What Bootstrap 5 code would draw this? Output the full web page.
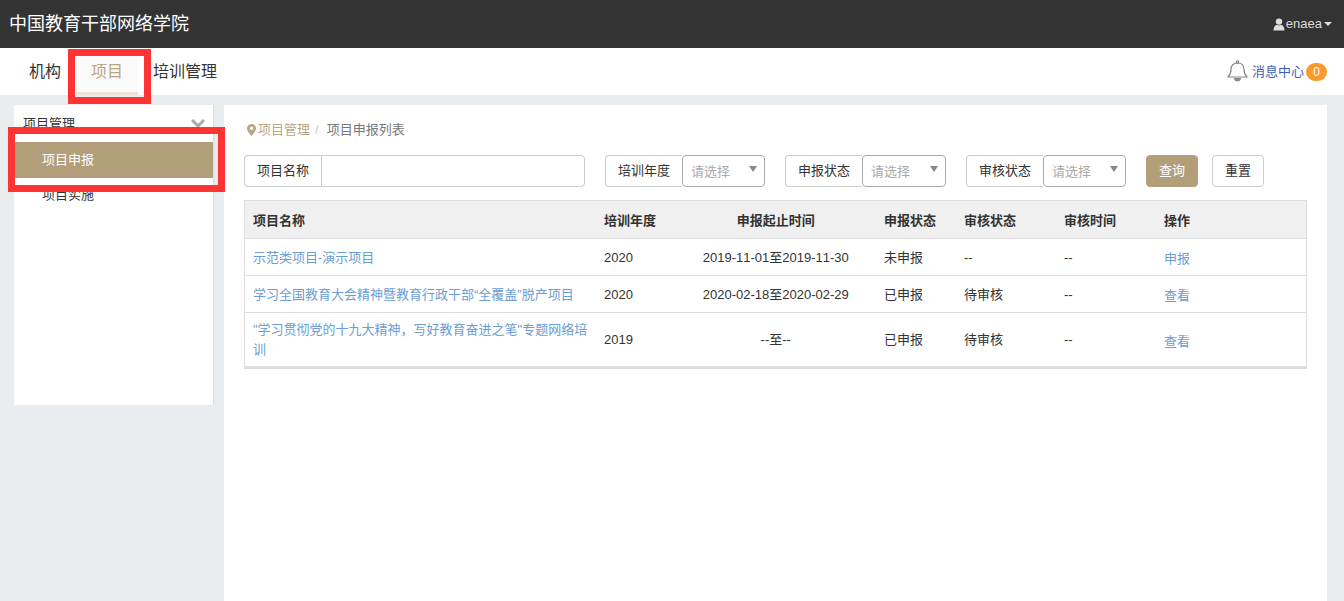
<!DOCTYPE html>
<html lang="zh-CN">
<head>
<meta charset="utf-8">
<title>中国教育干部网络学院</title>
<link rel="stylesheet" href="https://cdn.jsdelivr.net/npm/bootstrap@5.3.0/dist/css/bootstrap.min.css">
<style>
html,body{height:601px;overflow:hidden}
body{background:#e9edf0;font-family:"Liberation Sans","Noto Sans CJK SC",sans-serif;font-size:13px;color:#333;position:relative;font-kerning:none}
.top-bar{height:48px;background:#333;color:#fff;padding:0 12px 0 9px}
.brand-name{font-size:18px}
.user-menu{color:#ddd;font-size:13px}
.user-name{margin-left:1px}
.user-caret{width:0;height:0;border:4px solid transparent;border-top-color:#ddd;border-bottom:0;margin-left:2px}
.tab-bar{height:47px;background:#fff;padding-left:13px;padding-right:17px}
.tab-link{font-size:16px;color:#333;text-decoration:none;display:flex;align-items:center;height:39px;margin-top:8px;padding:0 15px 8px 16px}
.tab-on{width:62px;background:#fafafa;border-bottom:3px solid #eee3d3;color:#b9a684;justify-content:center;padding:0 0 5px 0}
.tab-last{padding-left:15px}
.msg-wrap{height:47px}
.bell-icon{margin-top:-2px}
.msg-link{color:#3c5fb5;text-decoration:none;font-size:13px}
.msg-count{background:#f89a2c;color:#fff;border-radius:10px;width:21px;height:18px;font-size:12px;line-height:18px;text-align:center;margin-left:2px}
.page-body{padding:10px 17px 0 14px;gap:11px;height:506px}
.side-panel{width:199px;height:300px;background:#fff;box-shadow:1px 0 1px #ddd;flex:none}
.side-head{height:37px;padding:0 8px 0 9px;font-size:13px;color:#333}
.side-item{height:36px;padding-left:28px;padding-bottom:2px;display:flex;align-items:center;color:#333;text-decoration:none;font-size:13px}
.side-on{background:#b29e78;color:#fff;padding-bottom:0}
.main-panel{flex:1;background:#fff;padding:17px 20px 0 20px;min-width:0}
.crumbs{height:16px;margin-bottom:17px;color:#999;font-size:13px;padding-left:3px}
.crumb-pin{margin-right:2px}
.crumb-a{color:#b9a684}
.crumb-sep{color:#ccc;margin:0 8px 0 5px}
.crumb-b{color:#777}
.filter-row{height:32px;margin-bottom:13px}
.label-box{height:32px;border:1px solid #ccc;border-right:0;border-radius:4px 0 0 4px;background:#fff;color:#333;font-size:13px;width:77px;display:flex;align-items:center;justify-content:center}
.gap-left{margin-left:20px}
.text-box{width:264px;height:32px;border:1px solid #ccc;border-radius:0 4px 4px 0}
.pick-box{width:83px;height:32px;border:1px solid #aaa;border-radius:4px;color:#aaa;font-size:13px;padding:2px 8px 0 8px;display:flex;align-items:center;justify-content:space-between}
.pick-wide{width:84px}
.pick-arrow{width:0;height:0;border:4.5px solid transparent;border-top:6px solid #888;border-bottom:0;margin-top:-6px;margin-right:-1px}
.btn-query,.btn-reset{height:32px;width:52px;font-size:13px;padding:0;border-radius:4px}
.btn-query{background:#b29e78;color:#fff;border:1px solid #b29e78;margin-left:20px}
.btn-reset{background:#fff;color:#333;border:1px solid #ccc;margin-left:14px}
.data-tbl{width:1063px;table-layout:fixed;border:1px solid #ddd;border-bottom:3px solid #ddd;margin:0;font-size:13px;color:#333}
.data-tbl th,.data-tbl td{padding:2px 7px 0 9.5px;vertical-align:middle;border-bottom:1px solid #ddd;border-top:0;line-height:20px;box-shadow:none}
.data-tbl th:first-child,.data-tbl td:first-child{padding-left:8px}
.data-tbl th{height:38px;background:#f0f0f0;font-weight:700;color:#333}
.data-tbl td{height:37px;background:#fff}
.data-tbl tr:last-child td{height:55px;border-bottom:0;padding-top:0}
.data-tbl a{color:#6c9dd3;text-decoration:none}
.col-name{width:350px}.col-year{width:80px}.col-time{width:200px}.col-state{width:80px}.col-audit{width:100px}
.op-link{position:relative;top:1px}
.data-tbl tr:last-child .op-link{top:2px}
.mark-box{position:absolute;border:7px solid #fe3434;pointer-events:none}
.mark-tab{left:68px;top:49px;width:83px;height:55px}
.mark-side{left:8px;top:127px;width:217px;height:65px}
</style>
</head>
<body>
<header class="top-bar d-flex align-items-center justify-content-between">
  <div class="brand-name">中国教育干部网络学院</div>
  <div class="user-menu d-flex align-items-center">
    <svg width="12" height="13" viewBox="0 0 12 13" fill="#ddd"><circle cx="6" cy="3.6" r="3.2"/><path d="M0.5 12.5c0-3.6 1.6-5.4 3.5-5.8 1.2.7 2.8.7 4 0 1.900.4 3.500 2.200 3.500 5.800z"/></svg>
    <span class="user-name">enaea</span><span class="user-caret"></span>
  </div>
</header>
<nav class="tab-bar d-flex align-items-start justify-content-between">
  <div class="d-flex">
    <a class="tab-link" href="#">机构</a>
    <a class="tab-link tab-on" href="#">项目</a>
    <a class="tab-link tab-last" href="#">培训管理</a>
  </div>
  <div class="msg-wrap d-flex align-items-center">
    <svg class="bell-icon" width="21" height="22" viewBox="0 0 21 22" fill="none" stroke="#888" stroke-width="1.2"><path d="M1 17c2-2 3-3.500 3-7.500C4 5.500 6.500 3 10.500 3S17 5.500 17 9.500c0 4 1 5.500 3 7.500z"/><circle cx="10.500" cy="2" r="1.200"/><path d="M7.500 18.500c.5 1.600 1.500 2.300 3 2.300s2.500-.7 3-2.300z" fill="#888"/></svg>
    <a class="msg-link ms-1" href="#">消息中心</a>
    <span class="msg-count">0</span>
  </div>
</nav>
<div class="page-body d-flex">
  <aside class="side-panel">
    <div class="side-head d-flex align-items-center justify-content-between">
      <span>项目管理</span>
      <svg width="14" height="9" viewBox="0 0 14 9" fill="none" stroke="#aaa" stroke-width="3"><path d="M1 1l6 6 6-6"/></svg>
    </div>
    <a class="side-item side-on" href="#">项目申报</a>
    <a class="side-item" href="#">项目实施</a>
  </aside>
  <main class="main-panel">
    <div class="crumbs d-flex align-items-center">
      <svg class="crumb-pin" width="9" height="12" viewBox="0 0 9 12" fill="#b9a684"><path fill-rule="evenodd" d="M4.500 0C2 0 0 2 0 4.400 0 7.200 4.500 12 4.500 12S9 7.200 9 4.400C9 2 7 0 4.500 0zm0 6a1.700 1.700 0 1 1 0-3.400 1.700 1.700 0 0 1 0 3.400z"/></svg>
      <span class="crumb-a">项目管理</span><span class="crumb-sep">/</span><span class="crumb-b">项目申报列表</span>
    </div>
    <form class="filter-row d-flex align-items-start">
      <div class="label-box">项目名称</div><input class="text-box" type="text" aria-label="项目名称">
      <div class="label-box gap-left">培训年度</div><div class="pick-box"><span>请选择</span><span class="pick-arrow"></span></div>
      <div class="label-box gap-left">申报状态</div><div class="pick-box pick-wide"><span>请选择</span><span class="pick-arrow"></span></div>
      <div class="label-box gap-left">审核状态</div><div class="pick-box"><span>请选择</span><span class="pick-arrow"></span></div>
      <button class="btn-query" type="button">查询</button>
      <button class="btn-reset" type="button">重置</button>
    </form>
    <table class="table data-tbl">
      <colgroup><col class="col-name"><col class="col-year"><col class="col-time"><col class="col-state"><col class="col-audit"><col class="col-audit"><col></colgroup>
      <thead><tr><th>项目名称</th><th>培训年度</th><th class="text-center">申报起止时间</th><th>申报状态</th><th>审核状态</th><th>审核时间</th><th>操作</th></tr></thead>
      <tbody>
        <tr><td><a href="#">示范类项目-演示项目</a></td><td>2020</td><td class="text-center">2019-11-01至2019-11-30</td><td>未申报</td><td>--</td><td>--</td><td><a class="op-link" href="#">申报</a></td></tr>
        <tr><td><a href="#">学习全国教育大会精神暨教育行政干部“全覆盖”脱产项目</a></td><td>2020</td><td class="text-center">2020-02-18至2020-02-29</td><td>已申报</td><td>待审核</td><td>--</td><td><a class="op-link" href="#">查看</a></td></tr>
        <tr><td><a href="#">"学习贯彻党的十九大精神，写好教育奋进之笔"专题网络培训</a></td><td>2019</td><td class="text-center">--至--</td><td>已申报</td><td>待审核</td><td>--</td><td><a class="op-link" href="#">查看</a></td></tr>
      </tbody>
    </table>
  </main>
</div>
<div class="mark-box mark-tab"></div>
<div class="mark-box mark-side"></div>
<script src="https://cdn.jsdelivr.net/npm/bootstrap@5.3.0/dist/js/bootstrap.bundle.min.js"></script>
</body>
</html>
